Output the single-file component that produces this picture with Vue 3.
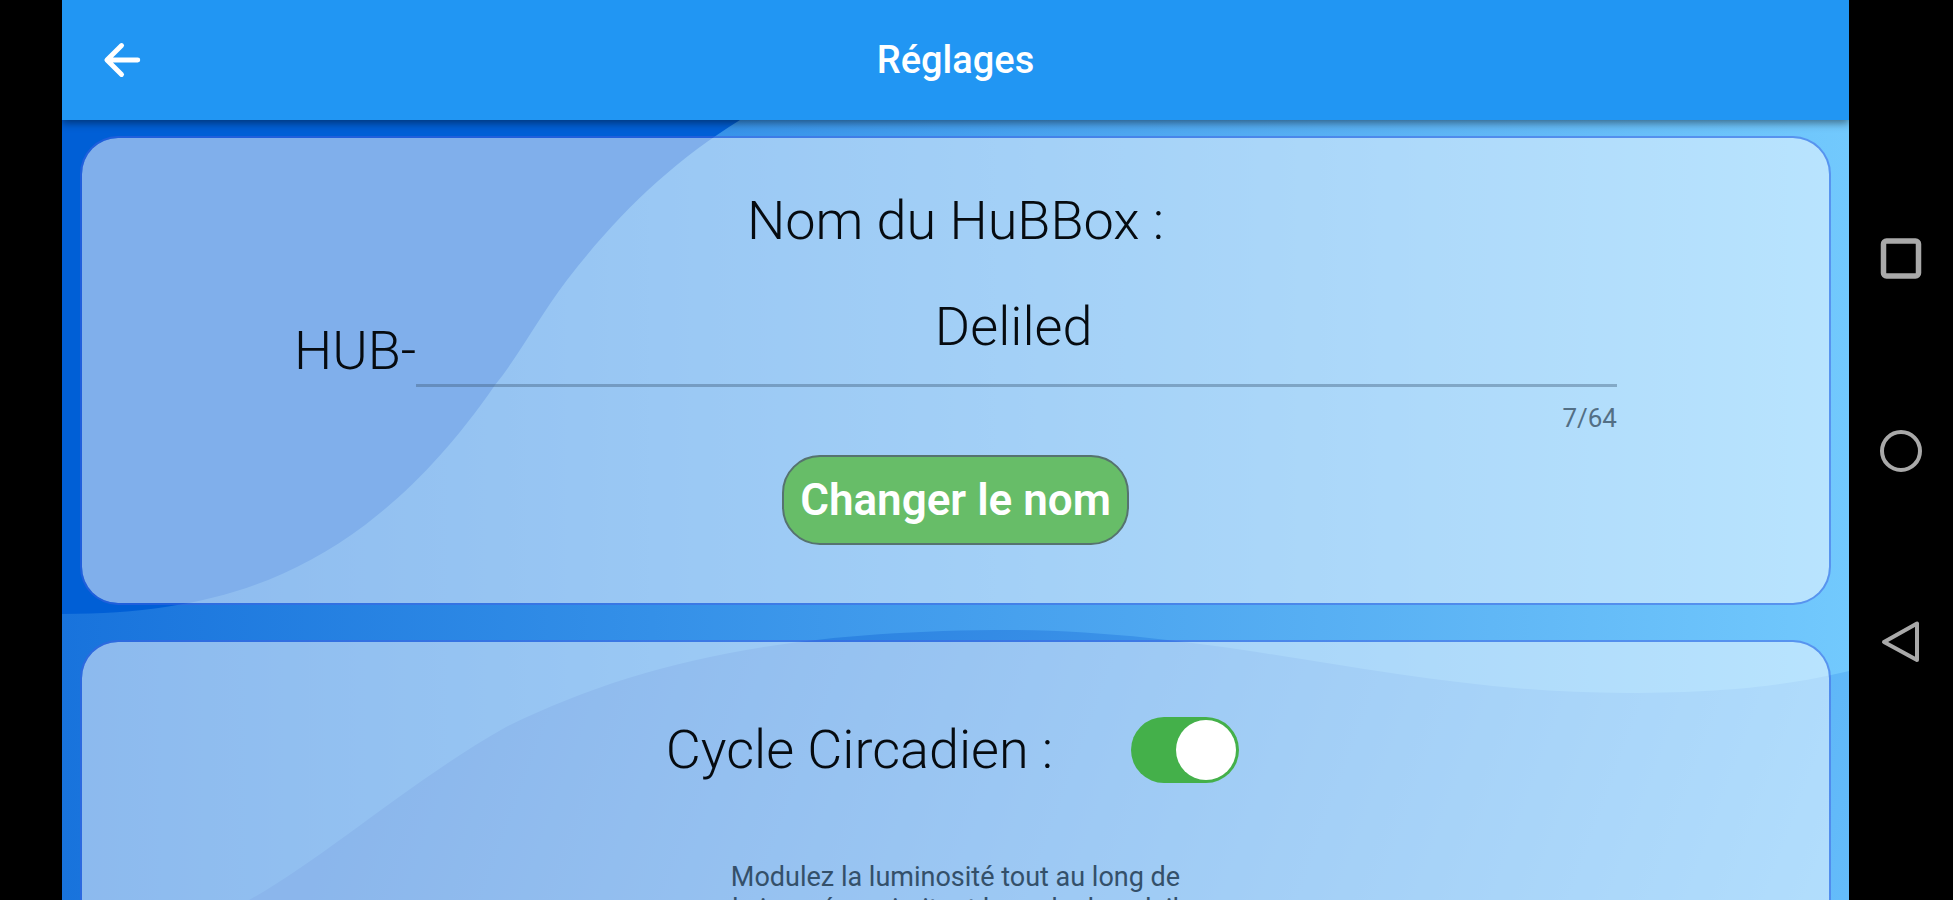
<script setup>
import { ref, computed } from 'vue'

const MAX_LENGTH = 64

const name = ref('Deliled')
const circadian = ref(true)

const counter = computed(() => `${name.value.length}/${MAX_LENGTH}`)
</script>

<template>
  <div class="screen">
    <div class="app">
      <header class="app-bar">
        <button class="back" type="button" aria-label="Retour">
          <svg viewBox="0 0 24 24" width="54" height="54">
            <path d="M19 12H5.600M11.800 5.600L5.300 12l6.500 6.400" />
          </svg>
        </button>
        <h1>Réglages</h1>
      </header>

      <div class="body">
        <svg class="waves" viewBox="0 0 1787 780" preserveAspectRatio="none" aria-hidden="true">
          <defs>
            <linearGradient id="light" x1="0" y1="0" x2="1" y2="0">
              <stop offset="0" stop-color="#1873dc" />
              <stop offset="0.33" stop-color="#3490e8" />
              <stop offset="0.8" stop-color="#60b7f6" />
              <stop offset="1" stop-color="#72c9fd" />
            </linearGradient>
            <linearGradient
              id="low"
              gradientUnits="userSpaceOnUse"
              x1="350"
              y1="500"
              x2="1700"
              y2="1000"
            >
              <stop offset="0" stop-color="#166dd8" />
              <stop offset="1" stop-color="#64bcfa" />
            </linearGradient>
          </defs>
          <rect width="1787" height="780" fill="url(#light)" />
          <path
            d="M0 0H678C610 42 556 94 505 160C475 200 458 234 433 265C390 327 350 369 303 405C220 467 130 494 0 494Z"
            fill="#005fd6"
          />
          <path
            d="M187 780C260 740 350 660 444 607C580 540 730 510 950 510C1180 512 1340 573 1565 573C1680 573 1740 562 1787 551V780Z"
            fill="url(#low)"
          />
        </svg>

        <main class="cards">
          <section class="card">
            <h2><label for="hub-name">Nom du HuBBox :</label></h2>
            <div class="field">
              <span class="prefix">HUB-</span>
              <div class="field-box">
                <input id="hub-name" v-model="name" type="text" :maxlength="MAX_LENGTH" />
                <span class="counter">{{ counter }}</span>
              </div>
            </div>
            <button class="rename" type="button">Changer le nom</button>
          </section>

          <section class="card card-cycle">
            <div class="switch-row">
              <h2><label for="circadian">Cycle Circadien :</label></h2>
              <input id="circadian" v-model="circadian" class="switch" type="checkbox" />
            </div>
            <p class="hint">Modulez la luminosité tout au long de la journée en imitant le cycle du soleil</p>
          </section>
        </main>
      </div>
    </div>

    <nav class="system-nav">
      <button type="button" aria-label="Applications récentes">
        <svg viewBox="0 0 48 48" width="48" height="48">
          <rect x="6.500" y="7" width="35" height="35" rx="3" stroke-width="5.500" />
        </svg>
      </button>
      <button type="button" aria-label="Accueil">
        <svg viewBox="0 0 48 48" width="48" height="48">
          <circle cx="24" cy="25" r="19" stroke-width="4" />
        </svg>
      </button>
      <button type="button" aria-label="Précédent">
        <svg viewBox="0 0 48 48" width="48" height="48">
          <path d="M40 5.500V42L7 24Z" stroke-width="4" />
        </svg>
      </button>
    </nav>
  </div>
</template>

<style>
body {
  margin: 0;
  background: #000;
}
</style>

<style scoped>
.screen {
  display: flex;
  height: 100vh;
  padding-left: 62px;
  box-sizing: border-box;
  overflow: hidden;
  background: #000;
  font-family: Roboto, 'Liberation Sans', sans-serif;
  color: #060b10;
}

button {
  padding: 0;
  border: 0;
  background: none;
  font-family: inherit;
  cursor: pointer;
}

svg {
  display: block;
}

h1,
h2,
p {
  margin: 0;
}

.app {
  flex: 1;
  min-width: 0;
  display: flex;
  flex-direction: column;
}

/* app bar */
.app-bar {
  display: grid;
  grid-template-columns: 120px 1fr 120px;
  align-items: center;
  height: 120px;
  flex: none;
  z-index: 1;
  background: #2196f3;
  box-shadow: 0 3px 8px rgba(0, 0, 0, 0.45);
  clip-path: inset(0 0 -20px 0);
}

.back {
  justify-self: center;
}

.back path {
  fill: none;
  stroke: #fff;
  stroke-width: 2.2;
  stroke-linecap: round;
  stroke-linejoin: round;
}

.app-bar h1 {
  font-size: 38px;
  font-weight: 500;
  line-height: 44px;
  text-align: center;
  color: #fff;
}

/* wave background and the cards stacked in the same grid cell */
.body {
  flex: 1;
  min-height: 0;
  display: grid;
  grid-template-rows: 100%;
  grid-template-columns: 100%;
  overflow: hidden;
}

.waves,
.cards {
  grid-area: 1 / 1;
}

.waves {
  width: 100%;
  height: 100%;
}

.cards {
  display: flex;
  flex-direction: column;
  gap: 35px;
  padding: 16px 18px;
}

.card {
  display: flex;
  flex-direction: column;
  align-items: center;
  flex: none;
  padding: 51px 0 58px;
  border: 2px solid rgba(64, 96, 226, 0.5);
  border-radius: 38px;
  background: rgba(255, 255, 255, 0.5);
  background-clip: padding-box;
}

.card-cycle {
  padding-top: 75px;
}

h2,
.prefix,
.field-box input {
  font-size: 54px;
  font-weight: 350;
  line-height: 64px;
}

.field {
  display: flex;
  align-items: center;
  align-self: stretch;
  margin-top: 36px;
  padding: 0 212px;
}

.prefix {
  padding-bottom: 20px;
}

.field-box {
  flex: 1;
  min-width: 0;
  display: flex;
  flex-direction: column;
}

.field-box input {
  width: 100%;
  height: 98px;
  box-sizing: border-box;
  padding: 0 6px 20px 0;
  border: 0;
  border-bottom: 3px solid rgba(60, 90, 120, 0.4);
  outline: none;
  background: none;
  font-family: inherit;
  text-align: center;
  color: inherit;
}

.counter {
  margin-top: 16px;
  align-self: flex-end;
  font-size: 26px;
  line-height: 30px;
  color: #536f85;
}

.rename {
  height: 90px;
  margin-top: 22px;
  padding: 0 16px;
  border: 2px solid #56736f;
  border-radius: 38px;
  background: #67bd68;
  font-size: 44px;
  font-weight: 600;
  color: #fff;
}

.switch-row {
  display: flex;
  align-items: center;
  gap: 78px;
  padding-right: 6px;
}

.switch {
  appearance: none;
  display: flex;
  width: 108px;
  height: 66px;
  margin: 0;
  padding: 3px;
  box-sizing: border-box;
  border-radius: 33px;
  background: #8b9aa5;
  cursor: pointer;
}

.switch::before {
  content: '';
  width: 60px;
  height: 60px;
  border-radius: 50%;
  background: #fff;
}

.switch:checked {
  justify-content: flex-end;
  background: #44b04a;
}

.hint {
  max-width: 460px;
  margin-top: 78px;
  font-size: 27px;
  line-height: 32px;
  text-align: center;
  color: #34506a;
}

/* android navigation bar */
.system-nav {
  display: flex;
  flex-direction: column;
  align-items: center;
  justify-content: center;
  gap: 144px;
  width: 104px;
  flex: none;
}

.system-nav svg {
  fill: none;
  stroke: #a9a9a9;
  stroke-linejoin: round;
}
</style>
